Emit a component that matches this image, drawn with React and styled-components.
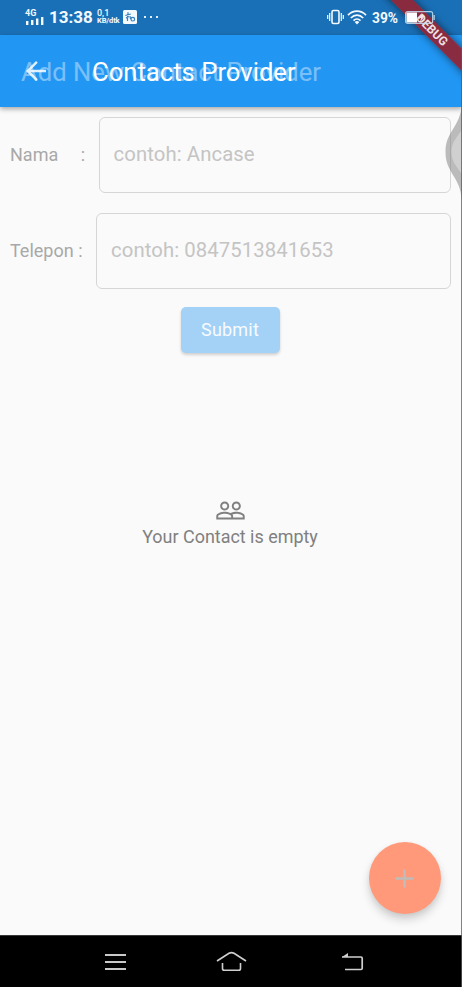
import React from "react";
import styled, { createGlobalStyle } from "styled-components";
import { MdArrowBack, MdAdd, MdPeopleOutline } from "react-icons/md";

const GlobalStyle = createGlobalStyle`
  * { box-sizing: border-box; }
  body { margin: 0; background: #fafafa; font-family: Roboto, sans-serif; }
`;

const Screen = styled.div`
  position: relative;
  display: flex;
  flex-direction: column;
  width: 462px;
  height: 987px;
  overflow: hidden;
  background: #fafafa;
`;

const StatusBar = styled.header`
  display: flex;
  align-items: center;
  justify-content: space-between;
  flex: none;
  height: 35px;
  padding: 0 27px 1px 25px;
  background: #1a70b7;
  color: #f4f9fd;
`;

const StatusGroup = styled.div`
  position: relative;
  z-index: 4;
  display: flex;
  align-items: center;
  svg { display: block; flex: none; }
`;

const WifiIcon = styled.svg`
  margin-left: 3px;
`;

const Signal = styled.div`
  width: 20px;
  height: 17px;
  font-size: 9px;
  line-height: 8px;
  font-weight: 700;
`;

const Clock = styled.span`
  width: 43px;
  margin: 0 5px 0 4px;
  font-size: 17px;
  line-height: 20px;
  font-weight: 700;
  white-space: nowrap;
`;

const Speed = styled.div`
  width: 24px;
  margin-right: 2px;
  font-size: 9px;
  line-height: 8px;
  font-weight: 500;
  white-space: nowrap;
  span { display: block; }
  span + span { font-size: 7.5px; letter-spacing: -0.1px; font-weight: 700; }
`;

const Dots = styled.div`
  display: flex;
  gap: 4px;
  margin-left: 7px;
  i { width: 2px; height: 2px; background: #e2eef8; }
`;

const Percent = styled.span`
  width: 28px;
  margin: 1px 5px 0;
  font-size: 13.8px;
  line-height: 16px;
  font-weight: 700;
  white-space: nowrap;
`;

const AppBar = styled.div`
  position: relative;
  z-index: 1;
  display: flex;
  align-items: center;
  flex: none;
  height: 71.5px;
  padding-left: 21px;
  background: #2196f3;
  color: #fff;
  box-shadow: 0 2px 5px rgba(0, 0, 0, 0.34);
`;

const BackIcon = styled(MdArrowBack)`
  width: 30px;
  height: 30px;
  flex: none;
  opacity: 0.85;
`;

const Title = styled.h1`
  margin: 2px 0 0 41px;
  font-size: 25.65px;
  line-height: 30px;
  font-weight: 400;
  white-space: nowrap;
`;

const LeavingTitle = styled(Title)`
  position: absolute;
  left: 21px;
  top: 22px;
  margin: 0;
  opacity: 0.4;
`;

const Form = styled.form`
  display: flex;
  flex-direction: column;
  flex: none;
  gap: 20px;
  padding: 10px 11px 0 10px;
  color: #a8a8a8;
`;

const FieldRow = styled.div`
  display: flex;
  align-items: center;
  height: 76px;
`;

const Label = styled.label`
  display: flex;
  justify-content: space-between;
  flex: none;
  width: ${(p) => p.$width}px;
  margin-right: ${(p) => p.$gap}px;
  font-size: 18px;
  line-height: 22px;
`;

const Input = styled.input`
  flex: 1;
  min-width: 0;
  height: 76px;
  padding: 0 14px 2px;
  border: 1.3px solid #d6d6d6;
  border-radius: 6px;
  background: transparent;
  font: 400 20.3px Roboto, sans-serif;
  letter-spacing: 0.1px;
  outline: none;
  &::placeholder { color: #c4c4c4; opacity: 1; }
`;

const Submit = styled.button`
  align-self: center;
  width: 99px;
  height: 46px;
  margin: -2px 1px 0 0;
  padding: 0;
  border: 0;
  border-radius: 5px;
  background: #a3d2f6;
  color: #f7fbfe;
  font: 400 18px Roboto, sans-serif;
  letter-spacing: 0.2px;
  box-shadow: 0 2px 3px rgba(0, 0, 0, 0.17);
`;

const Empty = styled.section`
  display: flex;
  flex-direction: column;
  align-items: center;
  flex: 1;
  padding: 142px 2px 0 0;
  color: #808080;
  font-size: 17.95px;
  line-height: 22px;
  svg { width: 31px; height: 31px; }
`;

const AddButton = styled.button`
  position: absolute;
  right: 21.5px;
  bottom: 73px;
  display: grid;
  place-items: center;
  width: 72px;
  height: 72px;
  padding: 0;
  border: 0;
  border-radius: 50%;
  background: #ff9979;
  color: #bfbcb9;
  box-shadow: 0 6px 10px rgba(0, 0, 0, 0.16), 0 2px 5px rgba(0, 0, 0, 0.06);
  svg { width: 31px; height: 31px; }
`;

const NavBar = styled.nav`
  display: flex;
  justify-content: space-between;
  align-items: center;
  flex: none;
  height: 52px;
  padding: 0 98px 0 104px;
  background: #000;
  border-top: 1px solid #373737;
  svg { display: block; }
`;

const HomeIcon = styled.svg`
  margin-right: 6px;
`;

const DebugClip = styled.div`
  position: absolute;
  z-index: 3;
  top: 0;
  right: 0;
  width: 90px;
  height: 90px;
  overflow: hidden;
`;

const DebugBanner = styled.div`
  position: absolute;
  left: -5px;
  top: 22px;
  width: 130px;
  height: 16px;
  transform: rotate(45deg);
  background: rgba(143, 38, 56, 0.95);
  color: #ede0e3;
  font-size: 12.2px;
  line-height: 16px;
  font-weight: 700;
  text-align: center;
  box-shadow: 0 0 9px rgba(0, 0, 0, 0.55);
`;

const EdgeHandle = styled.svg`
  position: absolute;
  z-index: 2;
  right: 0;
  top: 104px;
`;

const RightEdge = styled.div`
  position: absolute;
  z-index: 4;
  right: 0;
  top: 48px;
  bottom: 0;
  width: 1px;
  background: rgba(90, 90, 90, 0.75);
`;

export default function App() {
  return (
    <Screen>
      <GlobalStyle />
      <StatusBar>
        <StatusGroup>
          <Signal>
            4G
            <svg width="20" height="8" viewBox="0 0 20 8" fill="currentColor">
              <path d="M1 4h2.4v4H1zM6 3h2.4v5H6zM11 1.5h2.4V8H11zM16 0h2.4v8H16z" />
            </svg>
          </Signal>
          <Clock>13:38</Clock>
          <Speed><span>0,1</span><span>KB/dtk</span></Speed>
          <svg width="14" height="14" viewBox="0 0 14 14">
            <rect width="14" height="14" rx="1.5" fill="#f4f9fd" />
            <g fill="none" stroke="#3480bd" strokeWidth="1.2">
              <path d="M2.3 5.5 7.8 4M5 2.3v3M4.5 6v5M3 8l3-1.5M7 6l.5 3" />
              <circle cx="9.8" cy="9.2" r="1.8" />
            </g>
          </svg>
          <Dots><i /><i /><i /></Dots>
        </StatusGroup>
        <StatusGroup>
          <svg width="17" height="16" viewBox="0 0 17 16" fill="none" stroke="currentColor">
            <rect x="5" y="1.5" width="7" height="13" rx="1.5" strokeWidth="1.6" />
            <path d="M2.7 4v8M14.3 4v8M.7 6v4M16.3 6v4" strokeWidth="1.2" />
          </svg>
          <WifiIcon width="20" height="15" viewBox="0 0 20 15" fill="none" stroke="currentColor" strokeWidth="1.7">
            <path d="M1 5.2C6-.2 14-.2 19 5.2M3.8 8C7.5 4.2 12.5 4.2 16.2 8M6.5 10.7c2-2 5-2 7 0" />
            <path d="m7.7 12 2.3 2.6 2.3-2.6q-2.3-1.8-4.6 0z" fill="currentColor" stroke="none" />
          </WifiIcon>
          <Percent>39%</Percent>
          <svg width="30" height="13" viewBox="0 0 30 13">
            <rect x=".6" y=".6" width="27" height="11.8" rx="2" fill="none" stroke="#c8dff0" strokeWidth="1.2" strokeOpacity=".85" />
            <path d="M1.5 1.5h10.5v10H1.5z" fill="#fff" />
            <path d="m17 2-5 5h4l-1 4 5-6h-4z" fill="#f3dfe3" />
            <path d="M28.5 4h1.2v5h-1.2z" fill="#c8dff0" />
          </svg>
        </StatusGroup>
      </StatusBar>

      <AppBar>
        <LeavingTitle as="div">Add New Contact Provider</LeavingTitle>
        <BackIcon />
        <Title>Contacts Provider</Title>
      </AppBar>

      <Form>
        <FieldRow>
          <Label $width={75} $gap={13.5}><span>Nama</span><span>:</span></Label>
          <Input placeholder="contoh: Ancase" />
        </FieldRow>
        <FieldRow>
          <Label $width={72.5} $gap={13.5}><span>Telepon</span><span>:</span></Label>
          <Input placeholder="contoh: 0847513841653" />
        </FieldRow>
        <Submit type="button">Submit</Submit>
      </Form>

      <Empty>
        <MdPeopleOutline />
        <span>Your Contact is empty</span>
      </Empty>

      <AddButton type="button"><MdAdd /></AddButton>

      <NavBar>
        <svg width="23" height="18" viewBox="0 0 23 18" stroke="#c9c9c9" strokeWidth="1.8">
          <path d="M1 2h21M1 9h21M1 16h21" />
        </svg>
        <HomeIcon width="31" height="21" viewBox="0 0 31 21" fill="none" stroke="#cfcfcf" strokeWidth="1.6">
          <path d="M1 10 13 2.3q2.5-1.4 5 0L30 10M6.5 12v5.5q0 1.8 1.8 1.8h14.4q1.8 0 1.8-1.8V12" />
        </HomeIcon>
        <svg width="23" height="19" viewBox="0 0 23 19" fill="none" stroke="#cfcfcf" strokeWidth="1.7">
          <path d="M1 5h19q1.2 0 1.2 1.2v10q0 1.3-1.3 1.3H4" />
          <path d="m1 5 6-4v4z" fill="#cfcfcf" stroke="none" />
        </svg>
      </NavBar>

      <EdgeHandle width="17" height="96" viewBox="0 0 17 96">
        <path d="M17 0C15 24 .5 27 .5 48S15 72 17 96z" fill="#777" fillOpacity=".48" />
        <path d="M17 26C12 33 6.5 38 6.5 48S12 63 17 70z" fill="#d0d0d0" />
      </EdgeHandle>
      <DebugClip><DebugBanner>DEBUG</DebugBanner></DebugClip>
      <RightEdge />
    </Screen>
  );
}
